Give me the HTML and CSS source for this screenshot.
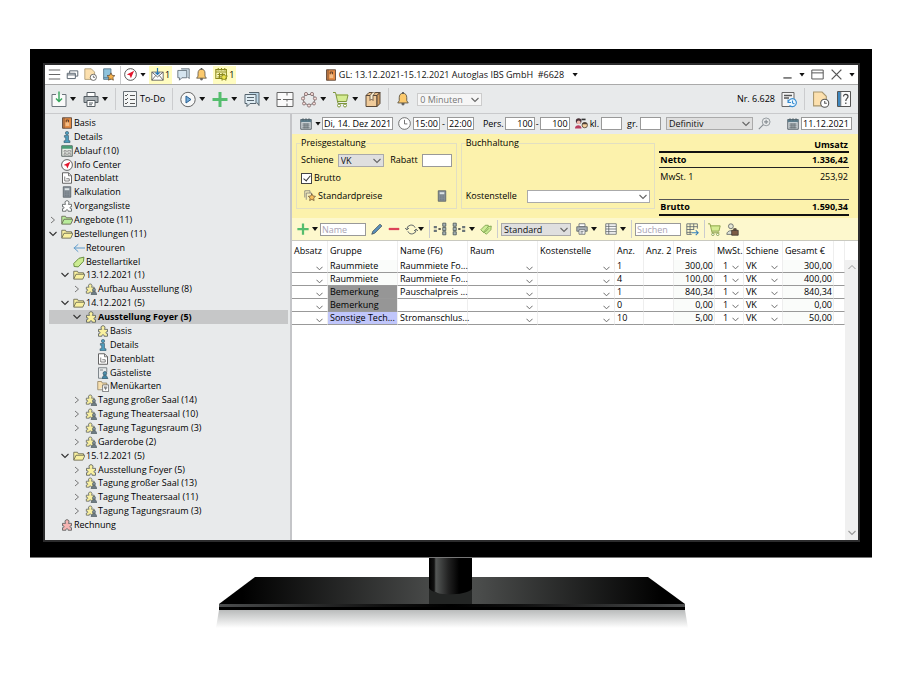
FILE: index.html
```html
<!DOCTYPE html>
<html lang="de">
<head>
<meta charset="utf-8">
<meta name="viewport" content="width=device-width, initial-scale=1">
<title>GL: 13.12.2021-15.12.2021 Autoglas IBS GmbH #6628</title>
<link rel="stylesheet" href="styles.css">
</head>
<body>
<svg class="defs" aria-hidden="true">
  <symbol id="menu" viewBox="0 0 16 16"><path d="M1 2.500h14M1 8h14M1 13.500h14" fill="none" stroke="#666" stroke-width="1.300"/></symbol>
  <symbol id="windows" viewBox="0 0 16 16" fill="#fff" stroke="#5a6670" stroke-width="1.200"><path d="M4.500 3.500h10v6.500h-10z"/><path d="M1.500 6.500h10v6.500h-10zM1.500 8.500h10"/></symbol>
  <symbol id="docclock" viewBox="0 0 16 16"><path d="M1 1h8l4 4v9H1z" fill="#fce0ae" stroke="#a8966f"/><circle cx="11.500" cy="11.500" r="3.800" fill="#fff" stroke="#555"/><path d="M11.500 9.500v2h2" fill="none" stroke="#555"/></symbol>
  <symbol id="bookstar" viewBox="0 0 16 16"><path d="M2 1h9v13H2z" fill="#8fc3dd" stroke="#4d6f84"/><path d="M2 12h8" stroke="#4d6f84"/><path d="M11 6l1.500 3 3.300.400-2.400 2.300.600 3.300-3-1.600-3 1.600.600-3.300-2.400-2.300 3.300-.400z" fill="#f7b24c" stroke="#604830" stroke-width=".9"/></symbol>
  <symbol id="compass" viewBox="0 0 16 16"><circle cx="8" cy="8" r="7.200" fill="#fff" stroke="#444" stroke-width="1.100"/><path d="M12.500 3.500L3.500 8l3.500 1 1.500 3.500z" fill="#e2152c"/></symbol>
  <symbol id="mail" viewBox="0 0 16 16"><path d="M1 5h14v10H1z" fill="#fff" stroke="#555"/><path d="M1 5l7 6 7-6M1 15l5-6M15 15l-5-6" fill="none" stroke="#555"/><path d="M8 0v8M5.500 5.500L8 8l2.500-2.500" fill="none" stroke="#2878b4" stroke-width="1.500"/></symbol>
  <symbol id="chat" viewBox="0 0 16 16" fill="#d5e5ef" stroke="#56646e"><path d="M5 1h10v9l0 3-2-2"/><path d="M1 3h11v9H6l-3 3v-3H1z"/></symbol>
  <symbol id="chatlines" viewBox="0 0 16 16" stroke="#56646e"><path d="M5 1h10v13l-2-3" fill="#bcd7e8"/><path d="M1 3h11v9H6l-3 3v-3H1z" fill="#e0edf4"/><path d="M3 6h7M3 9h7"/></symbol>
  <symbol id="bell" viewBox="0 0 16 16"><circle cx="8" cy="13.500" r="1.800" fill="#666"/><path d="M8 1.500c-3 0-4.300 2-4.300 5v3.500L2 12.500h12L12.300 10V6.500c0-3-1.300-5-4.300-5z" fill="#fbc96c" stroke="#5b5344"/><path d="M8 0v2" stroke="#555" stroke-width="2"/></symbol>
  <symbol id="calstar" viewBox="0 0 16 16"><path d="M1 2h13v11H1zM1 5h13M4 0v3M8 0v3M12 0v3M3 8h9M3 11h5M5.500 6v7M9 6v4" fill="none" stroke="#8b8a1c" stroke-width="1.300"/><path d="M11 7l1.300 2.600 3 .400-2.200 2.100.500 3-2.600-1.400-2.600 1.400.500-3-2.200-2.100 3-.400z" fill="#efe64a" stroke="#7c7b1c" stroke-width=".9"/></symbol>
  <symbol id="book" viewBox="0 0 16 16"><path d="M2 1h12v14H2z" fill="#e58b43" stroke="#5f4a3c" stroke-width="1.200"/><path d="M4 1v14" stroke="#5f4a3c"/><path d="M6 7h5v5H6z" fill="#f3bd86"/><path d="M7 7V4h3v3" fill="none" stroke="#3d3128"/></symbol>
  <symbol id="min" viewBox="0 0 16 16"><path d="M2 13h12" stroke="#555" stroke-width="2"/></symbol>
  <symbol id="window" viewBox="0 0 16 16"><path d="M1 2.500h14v11H1zM1 6h14" fill="none" stroke="#555" stroke-width="1.200"/></symbol>
  <symbol id="close" viewBox="0 0 16 16"><path d="M2 2l12 12M14 2L2 14" stroke="#555" stroke-width="1.600"/></symbol>
  <symbol id="download" viewBox="0 0 16 16"><path d="M5 3H1v12h14V3h-4" fill="#fafafa" stroke="#6a737a"/><path d="M8 0v10M5 7l3 3 3-3" fill="none" stroke="#35a55b" stroke-width="1.400"/></symbol>
  <symbol id="printer" viewBox="0 0 16 16" stroke="#555d63"><path d="M4 1h8v4H4z" fill="#fff"/><path d="M1 5h14v6H1z" fill="#a9b0b4"/><path d="M4 9h8v6H4z" fill="#fff"/><path d="M6 11.500h4M6 13.300h3"/></symbol>
  <symbol id="checklist" viewBox="0 0 14 16"><path d="M.500.500h13v15H.500z" fill="#f3f5f5" stroke="#687076"/><path d="M2 4l1 1 2-2M2 8l1 1 2-2M2 12l1 1 2-2M7 4.500h5M7 8.500h5M7 12.500h5" fill="none" stroke="#555"/></symbol>
  <symbol id="play" viewBox="0 0 16 16"><circle cx="8" cy="8" r="7.200" fill="#f7f8f8" stroke="#666"/><path d="M6 4.500v7L11 8z" fill="#73addb" stroke="#285f91"/></symbol>
  <symbol id="plus" viewBox="0 0 16 16"><path d="M6.500.500h3v6h6v3h-6v6h-3v-6h-6v-3h6z" fill="#55bd6e"/></symbol>
  <symbol id="floor" viewBox="0 0 18 16"><path d="M1 1h16v14H1zM1 8h4M7 8h4M11 8v2M11 12v3M11 8h6M11 1v3" fill="#fafafa" stroke="#666"/></symbol>
  <symbol id="ring" viewBox="0 0 16 16"><rect x="2.500" y="3" width="11" height="10" rx="4" fill="none" stroke="#777"/><g fill="#f5dcd8" stroke="#7d6566" stroke-width=".8"><circle cx="5" cy="2.500" r="1.600"/><circle cx="11" cy="2.500" r="1.600"/><circle cx="14" cy="7" r="1.600"/><circle cx="2" cy="7" r="1.600"/><circle cx="3" cy="12" r="1.500"/><circle cx="13" cy="12" r="1.500"/><circle cx="8" cy="14" r="1.600"/></g></symbol>
  <symbol id="cart" viewBox="0 0 16 16"><path d="M3 3h12l-2 7H5z" fill="#d5ec92"/><path d="M0 1h2.500L5 12h9M3 3.500h12L13.500 10H5" fill="none" stroke="#7e963b"/><circle cx="6" cy="14" r="1.500" fill="#fff" stroke="#7d963c"/><circle cx="12" cy="14" r="1.500" fill="#fff" stroke="#7d963c"/></symbol>
  <symbol id="box" viewBox="0 0 16 16"><path d="M1 4h11v11H1z" fill="#f0cb9a" stroke="#594838"/><path d="M1 4l3-3h11l-3 3z" fill="#e6bd89" stroke="#594838"/><path d="M15 1v11l-3 3V4z" fill="#d19c60" stroke="#594838"/><path d="M7.500 1L5 4v5l1.500-1.500L8 9V4l2.500-3" fill="#faf0d4" stroke="#594838" stroke-width=".8"/></symbol>
  <symbol id="history" viewBox="0 0 16 16"><path d="M1 1h12v14H1z" fill="#f5f5f5" stroke="#666"/><path d="M3 4h8M3 6.500h5" stroke="#555" stroke-width="1.300"/><circle cx="11.500" cy="11" r="4" fill="#eef8ff"/><path d="M7.500 10a4 4 0 1 1 1 4M7 8v3h3M11.500 9v2.500l2 1" fill="none" stroke="#368cd1" stroke-width="1.100"/></symbol>
  <symbol id="help" viewBox="0 0 14 16"><path d="M.500.500h13v15H.500z" fill="#fafafa" stroke="#555"/><path d="M1 1h2.500v14H1z" fill="#3e87be"/><path d="M3.800 1v14" stroke="#444" stroke-width=".7"/><path d="M6.500 5.500C6.500 2.500 11 2.800 11 5.500c0 2-2.200 1.800-2.200 4.500M8.800 11.500v1.500" fill="none" stroke="#444" stroke-width="1.200"/></symbol>
  <symbol id="info" viewBox="0 0 16 16"><circle cx="8" cy="2.700" r="2.200" fill="#4d9dbd" stroke="#35586a" stroke-width=".8"/><path d="M4.500 6H10v7h2v2.500H4V13h2.200V8.300H4.500z" fill="#4d9dbd" stroke="#35586a" stroke-width=".8"/></symbol>
  <symbol id="ablauf" viewBox="0 0 16 16"><path d="M1 1h14v14H1z" fill="#e9eee7" stroke="#4b5755" stroke-width="1.200"/><path d="M1 1h14v4H1z" fill="#4a9c75"/><path d="M4 7.500h3v2H4zM4 11.500h3v2H4zM9 7.500h4v2H9zM9 11.500h4v2H9z" fill="#fff" stroke="#666" stroke-width=".8"/></symbol>
  <symbol id="doc" viewBox="0 0 16 16"><path d="M2 1h8l4 4v10H2z" fill="#fff" stroke="#555" stroke-width="1.200"/><path d="M10 1v4h4M5 6v6h6V9H7" fill="none" stroke="#555"/></symbol>
  <symbol id="calc" viewBox="0 0 16 16"><path d="M3 1h10v14H3z" fill="#89929a" stroke="#505960"/><path d="M5 3h6v2.500H5z" fill="#dce3e5"/><path d="M5 8h6M5 10.500h6M5 13h6" stroke="#626c73" stroke-dasharray="1.500 .8"/></symbol>
  <symbol id="puzzle" viewBox="0 0 16 16"><path d="M6.200 5.800C4.400 3.700 5.400.900 8 .900s3.600 2.800 1.800 4.900H14v3.200c-2.800-1-2.800 3.400 0 2.600V15H9.500c.9-2.500-3.900-2.500-3 0H2v-3.400c2.800.8 2.800-3.600 0-2.600V5.800z" stroke="#555b5b" stroke-width="1.100"/></symbol>
  <symbol id="puzzleman" viewBox="0 0 16 16"><use href="#puzzle" fill="#f8efa0" width="14" height="15"/><circle cx="12" cy="9" r="2" fill="#83929b" stroke="#4d5960" stroke-width=".8"/><path d="M8 15.500l2-4h4l2 4z" fill="#6f7d85" stroke="#4d5960" stroke-width=".8"/></symbol>
  <symbol id="folder" viewBox="0 0 16 16"><path d="M1 13V3h5l1 2h7v2" stroke="#62624f" stroke-width="1.100"/><path d="M1 13.500L4 7h12l-3 6.500z" stroke="#62624f" stroke-width="1.100"/></symbol>
  <symbol id="back" viewBox="0 0 16 16"><path d="M16 8H1M7 3L1.500 8 7 13" fill="none" stroke="#5898c9" stroke-width="1.300"/></symbol>
  <symbol id="tag" viewBox="0 0 16 16"><path d="M1 10l7-7 6.500-1.500L14 7l-7 7.500-5.500-.5z" fill="#ccec92" stroke="#5e8534" stroke-width="1.200"/></symbol>
  <symbol id="guest" viewBox="0 0 16 16"><path d="M2 15V1h11v6M2 15h4M4 4h4" fill="none" stroke="#5d676d"/><circle cx="10.500" cy="8.500" r="2.400" fill="#4d91ad" stroke="#33566a"/><path d="M6.500 15.500l2-4h4l2 4z" fill="#4189a8" stroke="#33566a"/></symbol>
  <symbol id="menucard" viewBox="0 0 16 16"><path d="M1 13V2h5l1 2h6v3M1 13h6" fill="#f7dfae" stroke="#8c7958"/><path d="M7.500 6.500h8v9h-8z" fill="#fff" stroke="#555"/><path d="M10 8.500v2.500h3V8.500M11.500 8.500v5" fill="none" stroke="#555" stroke-width=".9"/></symbol>
  <symbol id="right" viewBox="0 0 16 16"><path d="M4 2l7 6-7 6" fill="none" stroke="#777" stroke-width="2"/></symbol>
  <symbol id="down" viewBox="0 0 16 16"><path d="M1 4l7 7 7-7" fill="none" stroke="currentColor" stroke-width="2.200"/></symbol>
  <symbol id="up" viewBox="0 0 16 16"><path d="M1 12l7-7 7 7" fill="none" stroke="#999" stroke-width="2"/></symbol>
  <symbol id="calendar" viewBox="0 0 16 16"><path d="M1 2h14v13H1z" fill="#d6dcdf" stroke="#4c565c" stroke-width="1.200"/><path d="M1 2h14v3.500H1z" fill="#5c7c8a"/><path d="M4 0v3.500M8 0v3.500M12 0v3.500M3 8h10M3 10.500h10M3 13h10M5.500 7v7M8 7v7M10.500 7v7" stroke="#4c565c" stroke-width=".9"/></symbol>
  <symbol id="clock" viewBox="0 0 16 16"><circle cx="8" cy="8" r="7.200" fill="#fff" stroke="#555"/><path d="M8 3.500V8.500h3.500" fill="none" stroke="#555"/></symbol>
  <symbol id="kids" viewBox="0 0 16 16"><circle cx="4.500" cy="5" r="3.500" fill="#473037"/><circle cx="4.500" cy="6.500" r="2.300" fill="#f0b9ae"/><path d="M0 14c0-5 8-5 8 0z" fill="#b93c5f"/><path d="M8 2h5v2H8z" fill="#333"/><circle cx="12" cy="10" r="3.300" fill="#f6d1a0" stroke="#4e4137"/><path d="M8.500 9c1-3.500 6-3.500 7 0z" fill="#4e4137"/></symbol>
  <symbol id="key" viewBox="0 0 16 16"><circle cx="10" cy="6" r="4.800" fill="none" stroke="#848b90"/><path d="M10 3.500v5M7.500 6h5M6.500 9.500L1 15" stroke="#848b90" stroke-width="1.300"/></symbol>
  <symbol id="pricestar" viewBox="0 0 16 16"><path d="M3 13V4h7v4M1 10V1h7v3" fill="#f6eebb" stroke="#777"/><path d="M10.500 5l1.500 3 3.300.400-2.400 2.400.600 3.300-3-1.600-3 1.600.600-3.300-2.400-2.400 3.300-.400z" fill="#f6bd5c" stroke="#604830" stroke-width=".9"/></symbol>
  <symbol id="pencil" viewBox="0 0 16 16"><path d="M1 15l1.500-4L12 1.500l2.500 2.500L5 13.500z" fill="#5991bd" stroke="#394956"/></symbol>
  <symbol id="minus" viewBox="0 0 16 16"><path d="M1 6.500h14v3H1z" fill="#dc4358"/></symbol>
  <symbol id="refresh" viewBox="0 0 18 16"><path d="M2.500 8a6 6 0 0 1 11.500-2.500M15.500 8A6 6 0 0 1 4 10.500M0 6l2.500 2.500L5.500 6M12.500 10l3-2.500L18 10" fill="none" stroke="#555d61" stroke-width="1.300"/></symbol>
  <symbol id="link" viewBox="0 0 18 16"><path d="M1 4h4v3H1zM1 9h4v3H1z" fill="#6a7478"/><path d="M7 8h3" stroke="#333" stroke-width="2"/><path d="M12.500.500h4v4h-4zM12.500 6h4v4h-4zM12.500 11.500h4v4h-4z" fill="#a8b5b6" stroke="#434e53"/></symbol>
  <symbol id="link2" viewBox="0 0 18 16"><path d="M13 4h4v3h-4zM13 9h4v3h-4z" fill="#6a7478"/><path d="M8 8h3" stroke="#333" stroke-width="2"/><path d="M1.500.500h4v4h-4zM1.500 6h4v4h-4zM1.500 11.500h4v4h-4z" fill="#a8b5b6" stroke="#434e53"/></symbol>
  <symbol id="tags" viewBox="0 0 16 16"><path d="M1 9l6-6h4v4l-6 6z" fill="#cdec96" stroke="#6d953f"/><path d="M5 12l6-7 4-1-.5 5-6 6z" fill="#cdec96" stroke="#6d953f"/><path d="M7 12l5-5" stroke="#6d953f"/></symbol>
  <symbol id="table" viewBox="0 0 16 16"><path d="M1 1h14v14H1zM1 4.500h14M1 8h14M1 11.500h14M5 1v14" fill="#fafafa" stroke="#555d61"/></symbol>
  <symbol id="tablearrow" viewBox="0 0 16 16"><path d="M14 7V1H1v13h6M1 4.500h13M1 8h9M1 11.500h6M5 1v13M9.500 1v7" fill="none" stroke="#59636b"/><path d="M7 12h8M12 9l3 3-3 3" fill="none" stroke="#347fba" stroke-width="1.300"/></symbol>
  <symbol id="porter" viewBox="0 0 16 16"><circle cx="6" cy="4" r="3" fill="#e4e5d4" stroke="#5b6164"/><path d="M1 14c0-6 10-6 10 0z" fill="#dce2d8" stroke="#5b6164"/><path d="M7 9h8v6H7zM9.500 9V7h3v2" fill="#7c5b46" stroke="#3f3833"/></symbol>
</svg>

<main class="monitor">
  <div class="screen">
    <header class="titlebar">
      <div class="title-tools">
        <button aria-label="Menü"><svg class="i13"><use href="#menu"/></svg></button>
        <button aria-label="Fenster"><svg class="i13"><use href="#windows"/></svg></button>
        <button aria-label="Zuletzt verwendet"><svg class="i13"><use href="#docclock"/></svg></button>
        <button aria-label="Favoriten"><svg class="i13"><use href="#bookstar"/></svg></button>
        <div class="title-group">
          <span class="rule"></span>
          <button class="split" aria-label="Info Center"><svg class="i13"><use href="#compass"/></svg><span class="caret"></span></button>
          <button class="notice"><svg class="i13"><use href="#mail"/></svg>1</button>
        </div>
        <button aria-label="Chat"><svg class="i13"><use href="#chat"/></svg></button>
        <button aria-label="Erinnerungen"><svg class="i13"><use href="#bell"/></svg></button>
        <button class="notice"><svg class="i13"><use href="#calstar"/></svg>1</button>
      </div>
      <h1 class="title"><svg class="i12"><use href="#book"/></svg><span>GL: 13.12.2021-15.12.2021 Autoglas IBS GmbH&nbsp; #6628</span><span class="caret"></span></h1>
      <div class="window-tools">
        <button aria-label="Minimieren"><svg class="i11"><use href="#min"/></svg></button>
        <span class="caret"></span>
        <button aria-label="Maximieren"><svg class="i13"><use href="#window"/></svg></button>
        <button aria-label="Schließen"><svg class="i13"><use href="#close"/></svg></button>
        <span class="caret"></span>
      </div>
    </header>

    <nav class="toolbar" aria-label="Werkzeuge">
      <button class="split" aria-label="Speichern"><svg class="i16"><use href="#download"/></svg><span class="caret"></span></button>
      <button class="split" aria-label="Drucken"><svg class="i16"><use href="#printer"/></svg><span class="caret"></span></button>
      <span class="rule"></span>
      <button class="split"><svg class="i14"><use href="#checklist"/></svg>To-Do</button>
      <span class="rule"></span>
      <button class="split" aria-label="Start"><svg class="i16"><use href="#play"/></svg><span class="caret"></span></button>
      <button class="split" aria-label="Neu"><svg class="i16"><use href="#plus"/></svg><span class="caret"></span></button>
      <button class="split" aria-label="Nachrichten"><svg class="i16"><use href="#chatlines"/></svg><span class="caret"></span></button>
      <button aria-label="Raumplan"><svg class="i18"><use href="#floor"/></svg></button>
      <button class="split" aria-label="Bestuhlung"><svg class="i16"><use href="#ring"/></svg><span class="caret"></span></button>
      <button class="split" aria-label="Warenkorb"><svg class="i16"><use href="#cart"/></svg><span class="caret"></span></button>
      <button aria-label="Paket"><svg class="i16"><use href="#box"/></svg></button>
      <span class="rule"></span>
      <button aria-label="Erinnerung"><svg class="i14"><use href="#bell"/></svg></button>
      <span class="select minutes"><select aria-label="Erinnerung in"><option>0 Minuten</option></select><svg class="i8"><use href="#down"/></svg></span>
      <div class="toolbar-end">
        <button class="split number">Nr. 6.628<svg class="i16"><use href="#history"/></svg></button>
        <span class="rule"></span>
        <button aria-label="Wiedervorlage"><svg class="i18"><use href="#docclock"/></svg></button>
        <button aria-label="Hilfe"><svg class="i14"><use href="#help"/></svg></button>
      </div>
    </nav>

    <div class="workspace">
      <ul class="tree">
        <li class="node"><span class="twig"></span><svg class="i12"><use href="#book"/></svg>Basis</li>
        <li class="node"><span class="twig"></span><svg class="i12"><use href="#info"/></svg>Details</li>
        <li class="node"><span class="twig"></span><svg class="i12"><use href="#ablauf"/></svg>Ablauf (10)</li>
        <li class="node"><span class="twig"></span><svg class="i12"><use href="#compass"/></svg>Info Center</li>
        <li class="node"><span class="twig"></span><svg class="i12"><use href="#doc"/></svg>Datenblatt</li>
        <li class="node"><span class="twig"></span><svg class="i12"><use href="#calc"/></svg>Kalkulation</li>
        <li class="node"><span class="twig"></span><svg class="i12 white"><use href="#puzzle"/></svg>Vorgangsliste</li>
        <li class="node"><svg class="twig"><use href="#right"/></svg><svg class="i12 green"><use href="#folder"/></svg>Angebote (11)</li>
        <li class="node"><svg class="twig"><use href="#down"/></svg><svg class="i12 yellow"><use href="#folder"/></svg>Bestellungen (11)</li>
        <li class="node level-1"><span class="twig"></span><svg class="i12"><use href="#back"/></svg>Retouren</li>
        <li class="node level-1"><span class="twig"></span><svg class="i12"><use href="#tag"/></svg>Bestellartikel</li>
        <li class="node level-1"><svg class="twig"><use href="#down"/></svg><svg class="i12 yellow"><use href="#folder"/></svg>13.12.2021 (1)</li>
        <li class="node level-2"><svg class="twig"><use href="#right"/></svg><svg class="i12"><use href="#puzzleman"/></svg>Aufbau Ausstellung (8)</li>
        <li class="node level-1"><svg class="twig"><use href="#down"/></svg><svg class="i12 yellow"><use href="#folder"/></svg>14.12.2021 (5)</li>
        <li class="node level-2 selected"><svg class="twig"><use href="#down"/></svg><svg class="i12 yellow"><use href="#puzzle"/></svg>Ausstellung Foyer (5)</li>
        <li class="node level-3"><span class="twig"></span><svg class="i12 yellow"><use href="#puzzle"/></svg>Basis</li>
        <li class="node level-3"><span class="twig"></span><svg class="i12"><use href="#info"/></svg>Details</li>
        <li class="node level-3"><span class="twig"></span><svg class="i12"><use href="#doc"/></svg>Datenblatt</li>
        <li class="node level-3"><span class="twig"></span><svg class="i12"><use href="#guest"/></svg>Gästeliste</li>
        <li class="node level-3"><span class="twig"></span><svg class="i12"><use href="#menucard"/></svg>Menükarten</li>
        <li class="node level-2"><svg class="twig"><use href="#right"/></svg><svg class="i12"><use href="#puzzleman"/></svg>Tagung großer Saal (14)</li>
        <li class="node level-2"><svg class="twig"><use href="#right"/></svg><svg class="i12"><use href="#puzzleman"/></svg>Tagung Theatersaal (10)</li>
        <li class="node level-2"><svg class="twig"><use href="#right"/></svg><svg class="i12"><use href="#puzzleman"/></svg>Tagung Tagungsraum (3)</li>
        <li class="node level-2"><svg class="twig"><use href="#right"/></svg><svg class="i12"><use href="#puzzleman"/></svg>Garderobe (2)</li>
        <li class="node level-1"><svg class="twig"><use href="#down"/></svg><svg class="i12 yellow"><use href="#folder"/></svg>15.12.2021 (5)</li>
        <li class="node level-2"><svg class="twig"><use href="#right"/></svg><svg class="i12 yellow"><use href="#puzzle"/></svg>Ausstellung Foyer (5)</li>
        <li class="node level-2"><svg class="twig"><use href="#right"/></svg><svg class="i12"><use href="#puzzleman"/></svg>Tagung großer Saal (13)</li>
        <li class="node level-2"><svg class="twig"><use href="#right"/></svg><svg class="i12"><use href="#puzzleman"/></svg>Tagung Theatersaal (11)</li>
        <li class="node level-2"><svg class="twig"><use href="#right"/></svg><svg class="i12"><use href="#puzzleman"/></svg>Tagung Tagungsraum (3)</li>
        <li class="node"><span class="twig"></span><svg class="i12 red"><use href="#puzzle"/></svg>Rechnung</li>
      </ul>

      <section class="detail">
        <form class="datebar">
          <button type="button" class="split" aria-label="Kalender"><svg class="i12"><use href="#calendar"/></svg><span class="caret"></span></button>
          <input class="w-date" aria-label="Datum" value="Di, 14. Dez 2021">
          <div class="pair"><svg class="i13"><use href="#clock"/></svg><input class="w-time" aria-label="Beginn" value="15:00"><span>-</span><input class="w-time" aria-label="Ende" value="22:00"></div>
          <div class="pair persons"><label for="pers">Pers.</label><input id="pers" class="w-num" value="100"><span>-</span><input class="w-num" aria-label="Personen bis" value="100"></div>
          <div class="pair"><svg class="i13"><use href="#kids"/></svg><label for="kl">kl.</label><input id="kl" class="w-small"></div>
          <div class="pair"><label for="gr">gr.</label><input id="gr" class="w-small"></div>
          <span class="select status"><select aria-label="Status"><option>Definitiv</option></select><svg class="i8"><use href="#down"/></svg></span>
          <button type="button" aria-label="Suchen"><svg class="i13"><use href="#key"/></svg></button>
          <div class="pair option"><svg class="i12"><use href="#calendar"/></svg><input class="w-day" aria-label="Option bis" value="11.12.2021"></div>
        </form>

        <div class="summary">
          <fieldset class="box">
            <legend>Preisgestaltung</legend>
            <div class="rows">
              <div class="row"><label for="schiene">Schiene</label><span class="select rail"><select id="schiene"><option>VK</option></select><svg class="i8"><use href="#down"/></svg></span><label class="push" for="rabatt">Rabatt</label><input id="rabatt" class="w-num"></div>
              <label class="row"><input type="checkbox" checked>Brutto</label>
              <div class="row prices"><svg class="i12"><use href="#pricestar"/></svg>Standardpreise<button type="button" class="push" aria-label="Rechner"><svg class="i12"><use href="#calc"/></svg></button></div>
            </div>
          </fieldset>
          <fieldset class="box">
            <legend>Buchhaltung</legend>
            <div class="rows bottom">
              <div class="row cost"><label for="kst">Kostenstelle</label><span class="select plain"><select id="kst"><option></option></select><svg class="i8"><use href="#down"/></svg></span></div>
            </div>
          </fieldset>
          <table class="totals">
            <thead><tr><th></th><th>Umsatz</th></tr></thead>
            <tbody>
              <tr class="net"><th>Netto</th><td>1.336,42</td></tr>
              <tr class="tax"><th>MwSt. 1</th><td>253,92</td></tr>
              <tr class="gross"><th>Brutto</th><td>1.590,34</td></tr>
            </tbody>
          </table>
        </div>

        <div class="itembar">
          <button class="split" aria-label="Hinzufügen"><svg class="i12"><use href="#plus"/></svg><span class="caret"></span></button>
          <input class="w-name" aria-label="Name" placeholder="Name">
          <button aria-label="Bearbeiten"><svg class="i12"><use href="#pencil"/></svg></button>
          <button aria-label="Entfernen"><svg class="i12"><use href="#minus"/></svg></button>
          <button aria-label="Aktualisieren"><svg class="i13"><use href="#refresh"/></svg><span class="caret"></span></button>
          <span class="rule"></span>
          <button aria-label="Gruppieren"><svg class="i14"><use href="#link"/></svg></button>
          <button class="split" aria-label="Verteilen"><svg class="i14"><use href="#link2"/></svg><span class="caret"></span></button>
          <button aria-label="Etiketten"><svg class="i12"><use href="#tags"/></svg></button>
          <span class="rule"></span>
          <span class="select view"><select aria-label="Ansicht"><option>Standard</option></select><svg class="i8"><use href="#down"/></svg></span>
          <button class="split" aria-label="Drucken"><svg class="i12"><use href="#printer"/></svg><span class="caret"></span></button>
          <button class="split table-button" aria-label="Tabelle"><svg class="i12"><use href="#table"/></svg><span class="caret"></span></button>
          <span class="rule"></span>
          <input class="w-name" aria-label="Suchen" placeholder="Suchen">
          <button aria-label="Exportieren"><svg class="i13"><use href="#tablearrow"/></svg></button>
          <span class="rule"></span>
          <button aria-label="Warenkorb"><svg class="i13"><use href="#cart"/></svg></button>
          <button aria-label="Personal"><svg class="i13"><use href="#porter"/></svg></button>
        </div>

        <div class="grid-area">
          <table class="items">
            <colgroup><col class="c36"><col class="c70"><col class="c70"><col class="c70"><col class="c77"><col class="c29"><col class="c30"><col class="c41"><col class="c29"><col class="c39"><col class="c51"><col class="c11"></colgroup>
            <thead><tr><th>Absatz</th><th>Gruppe</th><th>Name (F6)</th><th>Raum</th><th>Kostenstelle</th><th>Anz.</th><th>Anz. 2</th><th>Preis</th><th>MwSt.</th><th>Schiene</th><th>Gesamt €</th><th></th></tr></thead>
            <tbody>
              <tr><td class="drop"><svg><use href="#down"/></svg></td><td class="soft">Raummiete</td><td>Raummiete Fo...</td><td class="drop"><svg><use href="#down"/></svg></td><td class="drop"><svg><use href="#down"/></svg></td><td>1</td><td></td><td class="num">300,00</td><td class="drop vat">1<svg><use href="#down"/></svg></td><td class="drop">VK<svg><use href="#down"/></svg></td><td class="num">300,00</td><td></td></tr>
              <tr><td class="drop"><svg><use href="#down"/></svg></td><td class="soft">Raummiete</td><td>Raummiete Fo...</td><td class="drop"><svg><use href="#down"/></svg></td><td class="drop"><svg><use href="#down"/></svg></td><td>4</td><td></td><td class="num">100,00</td><td class="drop vat">1<svg><use href="#down"/></svg></td><td class="drop">VK<svg><use href="#down"/></svg></td><td class="num">400,00</td><td></td></tr>
              <tr><td class="drop"><svg><use href="#down"/></svg></td><td class="note">Bemerkung</td><td>Pauschalpreis ...</td><td class="drop"><svg><use href="#down"/></svg></td><td class="drop"><svg><use href="#down"/></svg></td><td>1</td><td></td><td class="num">840,34</td><td class="drop vat">1<svg><use href="#down"/></svg></td><td class="drop">VK<svg><use href="#down"/></svg></td><td class="num">840,34</td><td></td></tr>
              <tr><td class="drop"><svg><use href="#down"/></svg></td><td class="note">Bemerkung</td><td></td><td class="drop"><svg><use href="#down"/></svg></td><td class="drop"><svg><use href="#down"/></svg></td><td>0</td><td></td><td class="num">0,00</td><td class="drop vat">1<svg><use href="#down"/></svg></td><td class="drop">VK<svg><use href="#down"/></svg></td><td class="num">0,00</td><td></td></tr>
              <tr><td class="drop"><svg><use href="#down"/></svg></td><td class="tech">Sonstige Tech...</td><td>Stromanschlus...</td><td class="drop"><svg><use href="#down"/></svg></td><td class="drop"><svg><use href="#down"/></svg></td><td>10</td><td></td><td class="num">5,00</td><td class="drop vat">1<svg><use href="#down"/></svg></td><td class="drop">VK<svg><use href="#down"/></svg></td><td class="num">50,00</td><td></td></tr>
            </tbody>
          </table>
          <div class="scroll"><svg class="i8"><use href="#up"/></svg><svg class="i8 faint"><use href="#down"/></svg></div>
        </div>
      </section>
    </div>
  </div>
</main>

<svg class="stand" viewBox="0 0 478 80" aria-hidden="true">
  <defs>
    <linearGradient id="base"><stop offset="0.050" stop-color="#000"/><stop offset="0.500" stop-color="#505251"/><stop offset="0.560" stop-color="#4a4c4b"/><stop offset="0.950" stop-color="#000"/></linearGradient>
    <linearGradient id="edge"><stop offset="0" stop-color="#4b4d4e"/><stop offset="0.350" stop-color="#111"/><stop offset="0.500" stop-color="#000"/><stop offset="0.650" stop-color="#111"/><stop offset="1" stop-color="#4b4d4e"/></linearGradient>
    <linearGradient id="neck"><stop offset="0" stop-color="#000"/><stop offset="0.120" stop-color="#111"/><stop offset="0.160" stop-color="#555857"/><stop offset="0.450" stop-color="#222"/><stop offset="0.700" stop-color="#000"/></linearGradient>
    <linearGradient id="shade" x2="0" y2="1"><stop offset="0" stop-color="#b9bbbb"/><stop offset="1" stop-color="#fff"/></linearGradient>
  </defs>
  <path d="M7 52h466l3 18H4z" fill="url(#shade)"/>
  <path d="M43 19h393l37 27H7z" fill="url(#base)"/>
  <path d="M217 19h43v27h-43z" fill="#232524"/>
  <path d="M7 46h466v3H7z" fill="url(#edge)"/>
  <path d="M7 49h466v3H7z" fill="#000"/>
  <path d="M217 0h43v31c-4 6-32 7-36 3-3 0-6-2-7-4z" fill="url(#neck)"/>
</svg>
</body>
</html>
```
FILE: styles.css
```css
* { box-sizing: border-box; }
body {
  margin: 0;
  padding: 49px 28px 37px 30px;
  min-height: 100vh;
  display: flex;
  flex-direction: column;
  background: #fff;
  color: #000;
  font: 500 9px/12px "Open Sans", "Noto Sans", sans-serif;
}
.defs { position: absolute; width: 0; height: 0; }
button, input, select { font: inherit; color: inherit; margin: 0; border-radius: 0; }
button { display: inline-flex; align-items: center; padding: 0; border: 0; background: none; white-space: nowrap; }
svg { display: block; flex: none; }
ul, h1 { margin: 0; padding: 0; font: inherit; list-style: none; }
.i8 { width: 8px; height: 8px; }
.i11 { width: 11px; height: 11px; }
.i12 { width: 12px; height: 12px; }
.i13 { width: 13px; height: 13px; }
.i14 { width: 14px; height: 16px; }
.i16 { width: 16px; height: 17px; }
.i18 { width: 18px; height: 17px; }
.white { fill: #fff; }
.yellow { fill: #f9f09f; }
.green { fill: #b9ec9b; }
.red { fill: #f5b5b3; }
.caret { flex: none; width: 6px; height: 4px; background: #111; clip-path: polygon(0 0, 100% 0, 50% 100%); }
.rule { flex: none; align-self: stretch; width: 1px; background: #cbccce; }
.split { gap: 3px; }

.monitor {
  flex: 1;
  display: flex;
  padding: 16px 14px 17px 15px;
  background: #000;
  border-bottom: 1px solid #777;
}
.screen { flex: 1; min-width: 0; display: flex; flex-direction: column; background: #e8eaeb; box-shadow: 0 0 0 2px #2c2c2d; }
.stand { align-self: center; width: 478px; max-width: 100%; height: 80px; }

.titlebar { display: grid; grid-template-columns: 1fr auto 1fr; align-items: center; height: 20px; padding: 0 3px; background: #fff; border-bottom: 1px solid #aaa; }
.title-tools { display: flex; align-items: center; gap: 5px; }
.title-group { display: flex; align-items: center; gap: 3px; height: 18px; }
.notice { gap: 1px; height: 18px; padding: 0 2px; background: #fffcc0; }
.title { display: flex; align-items: center; gap: 2px; color: #111; }
.title .caret { margin-left: 6px; }
.window-tools { display: flex; align-items: center; justify-content: flex-end; gap: 6px; }

.toolbar { display: flex; align-items: center; gap: 7px; height: 29px; padding: 3px 7px 3px 6px; border-bottom: 1px solid #c9cacc; }
.toolbar-end { display: flex; align-items: center; align-self: stretch; gap: 7px; margin-left: auto; }
.number { gap: 6px; }

.select { position: relative; display: inline-flex; height: 13px; color: #111; }
.select select { appearance: none; width: 100%; height: 100%; padding: 0 14px 0 2px; border: 1px solid #aaa; background: #dfdfdf; line-height: 11px; }
.select svg { position: absolute; right: 3px; top: 3px; color: #666; pointer-events: none; }
.minutes { width: 65px; color: #777; }
.minutes select { background: #f6f6f6; border-color: #ccc; }
.status { flex: 0 1 87px; }
.view { width: 70px; }
.rail { width: 46px; }
.plain { flex: 0 1 123px; }
.plain select { background: #fff; }

.workspace { flex: 1; display: grid; grid-template-columns: 245fr 568fr; min-height: 0; }
.tree { display: grid; grid-auto-rows: 1fr; padding: 2px 2px 8px 4px; }
.node { display: flex; align-items: center; gap: 1px; min-height: 0; white-space: nowrap; }
.twig { width: 8px; height: 8px; margin-right: 3px; color: #333; }
.level-1 { padding-left: 12px; }
.level-2 { padding-left: 24px; }
.level-3 { padding-left: 36px; }
.selected { background: #c6c7c8; font-weight: 700; }

.detail { display: flex; flex-direction: column; min-width: 0; border-left: 2px solid #c4c5c8; background: #fff; }
.detail input { min-width: 0; height: 13px; padding: 0 1px; border: 1px solid #999; background: #fff; line-height: 11px; }
.datebar { display: flex; align-items: center; gap: 5px; height: 20px; padding: 0 6px 1px 8px; background: #e8eaeb; }
.datebar .w-date { width: 71px; margin-left: -4px; }
.pair { display: flex; align-items: center; gap: 2px; }
.persons { gap: 1px; margin-left: 4px; }
.pair .w-time { width: 27px; }
.w-num { width: 30px; text-align: right; }
.pair .w-small { width: 21px; }
.option { margin-left: auto; }
.pair .w-day { width: 51px; }

.summary { display: grid; grid-template-columns: 161fr 195fr 190fr; align-items: start; gap: 4px; padding: 3px 9px 2px 4px; background: #fcf2ac; }
.box { min-width: 0; margin: 0; padding: 0 4px 3px; border: 1px solid #e2dfc2; }
.box legend { padding: 0; }
.rows { display: flex; flex-direction: column; padding-top: 2px; }
.bottom { padding-top: 38px; }
.row { display: flex; align-items: center; gap: 4px; height: 18px; }
.push { margin-left: auto; }
.detail .row input[type="checkbox"] { appearance: none; position: relative; width: 11px; height: 11px; border: 1px solid #444; margin-right: -2px; }
.row input[type="checkbox"]:checked::before { content: ""; position: absolute; left: 3px; top: 0; width: 3px; height: 6px; border: solid #333; border-width: 0 1px 1px 0; transform: rotate(40deg); }
.prices { padding: 0 4px 0 3px; gap: 2px; }
.cost { justify-content: space-between; }

.totals { width: 100%; height: 78px; border-collapse: collapse; }
.totals th, .totals td { padding: 0 1px; text-align: left; font-weight: 700; line-height: 13px; }
.totals td, .totals th:last-child:not(:first-child) { text-align: right; }
.totals thead tr { height: 15px; border-bottom: 2px solid #111; }
.net { height: 15px; border-bottom: 1px solid #222; }
.totals .tax { height: 32px; border-bottom: 1px solid #555; }
.totals .tax th, .totals .tax td { padding-top: 2px; font-weight: 500; vertical-align: top; }
.gross { height: 16px; border-bottom: 2px solid #111; }

.itembar { display: flex; align-items: center; gap: 5px; height: 23px; padding: 2px 6px 2px 5px; background: #fdf8cd; border-bottom: 1px solid #c9c9c0; }
.itembar .w-name { width: 46px; }
.itembar ::placeholder { color: #aaa4b4; opacity: 1; }
.itembar .split + .w-name { margin-left: -3px; }
.itembar .rule { margin-right: -2px; }
.table-button { margin-left: 3px; }

.grid-area { flex: 1; display: grid; grid-template-columns: 553fr 13px; align-items: start; }
.items { width: 100%; table-layout: fixed; border-collapse: separate; border-spacing: 0; }
.c36 { width: 36px; } .c70 { width: 70px; } .c77 { width: 77px; } .c29 { width: 29px; } .c30 { width: 30px; }
.c41 { width: 41px; } .c39 { width: 39px; } .c51 { width: 51px; } .c11 { width: 11px; }
.items th { height: 19px; padding: 0 0 0 2px; border-right: 1px solid #eee; text-align: left; font-weight: 500; white-space: nowrap; }
.items td { height: 13px; padding: 0 2px; border-right: 1px solid #eee; border-bottom: 1px solid #999; line-height: 12px; white-space: nowrap; }
.items .num { text-align: right; background: #fafcfa; padding-right: 1px; }
.items .soft { background: #fafcfa; }
.items .note { background: #969696; }
.items .tech { background: #c0c6fb; }
.drop svg { float: right; width: 7px; height: 7px; margin: 4px 2px 0 0; color: #666; }
.items .vat { padding-left: 8px; }
.scroll { align-self: stretch; display: flex; flex-direction: column; align-items: center; justify-content: space-between; margin-top: 19px; padding: 3px 0; background: #f0f0f0; }
.faint { color: #999; }
```
